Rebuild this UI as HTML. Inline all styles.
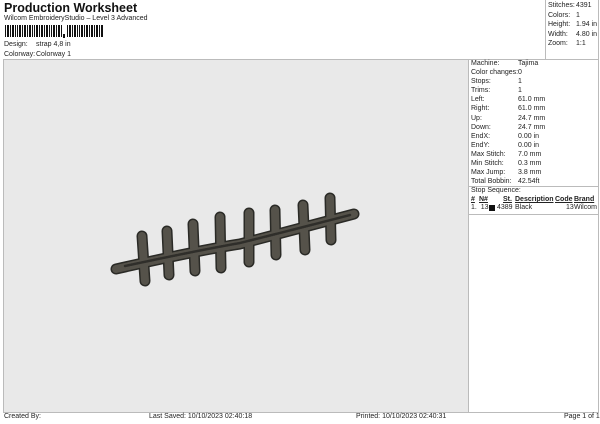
<!DOCTYPE html>
<html><head><meta charset="utf-8"><style>
body{margin:0;width:600px;height:424px;background:#fff;font-family:"Liberation Sans",sans-serif;color:#222;position:relative;overflow:hidden}
.a{position:absolute;font-size:7px;white-space:nowrap}
</style></head><body>
<div class="a" style="left:4px;top:1px;font-size:12.5px;font-weight:bold;color:#111">Production Worksheet</div>
<div class="a" style="left:4px;top:15px">Wilcom EmbroideryStudio – Level 3 Advanced</div>
<svg style="position:absolute;left:5px;top:25px" width="98" height="14">
<g fill="#111">
<rect x="0" y="0" width="1" height="12"/><rect x="2" y="0" width="2" height="12"/><rect x="5" y="0" width="1" height="12"/><rect x="7" y="0" width="2" height="12"/><rect x="10" y="0" width="1" height="12"/><rect x="12" y="0" width="1" height="12"/><rect x="14" y="0" width="2" height="12"/><rect x="17" y="0" width="1" height="12"/><rect x="19" y="0" width="2" height="12"/><rect x="22" y="0" width="1" height="12"/><rect x="24" y="0" width="2" height="12"/><rect x="27" y="0" width="1" height="12"/><rect x="29" y="0" width="1" height="12"/><rect x="31" y="0" width="2" height="12"/><rect x="34" y="0" width="1" height="12"/><rect x="36" y="0" width="2" height="12"/><rect x="39" y="0" width="1" height="12"/><rect x="41" y="0" width="2" height="12"/><rect x="44" y="0" width="1" height="12"/><rect x="46" y="0" width="1" height="12"/><rect x="48" y="0" width="2" height="12"/><rect x="51" y="0" width="1" height="12"/><rect x="53" y="0" width="2" height="12"/><rect x="56" y="0" width="1" height="12"/><rect x="58" y="9" width="2" height="4"/><rect x="62" y="0" width="1" height="12"/><rect x="64" y="0" width="2" height="12"/><rect x="67" y="0" width="1" height="12"/><rect x="69" y="0" width="2" height="12"/><rect x="72" y="0" width="1" height="12"/><rect x="74" y="0" width="1" height="12"/><rect x="76" y="0" width="2" height="12"/><rect x="79" y="0" width="1" height="12"/><rect x="81" y="0" width="2" height="12"/><rect x="84" y="0" width="1" height="12"/><rect x="86" y="0" width="2" height="12"/><rect x="89" y="0" width="1" height="12"/><rect x="91" y="0" width="2" height="12"/><rect x="94" y="0" width="1" height="12"/><rect x="96" y="0" width="2" height="12"/>
</g></svg>
<div class="a" style="left:4px;top:41px">Design:</div><div class="a" style="left:36px;top:41px">strap 4,8 in</div>
<div class="a" style="left:4px;top:51px">Colorway:</div><div class="a" style="left:36px;top:51px">Colorway 1</div>
<div style="position:absolute;left:3px;top:59px;width:595px;border-top:1px solid #bbb"></div>
<div style="position:absolute;left:545px;top:0;width:1px;height:59px;background:#bbb"></div>
<div style="position:absolute;left:598px;top:0;width:1px;height:412px;background:#bbb"></div>
<div style="position:absolute;left:3px;top:59px;width:1px;height:353px;background:#bbb"></div>
<div class="a" style="left:548px;top:1px;line-height:9.6px">Stitches:<br>Colors:<br>Height:<br>Width:<br>Zoom:</div>
<div class="a" style="left:576px;top:1px;line-height:9.6px">4391<br>1<br>1.94 in<br>4.80 in<br>1:1</div>
<div style="position:absolute;left:4px;top:60px;width:464px;height:352px;background:#e9e9e9"></div>
<div style="position:absolute;left:468px;top:60px;width:1px;height:352px;background:#bbb"></div>
<div class="a" style="left:471px;top:59px;line-height:9.1px">Machine:<br>Color changes:<br>Stops:<br>Trims:<br>Left:<br>Right:<br>Up:<br>Down:<br>EndX:<br>EndY:<br>Max Stitch:<br>Min Stitch:<br>Max Jump:<br>Total Bobbin:</div>
<div class="a" style="left:518px;top:59px;line-height:9.1px">Tajima<br>0<br>1<br>1<br>61.0 mm<br>61.0 mm<br>24.7 mm<br>24.7 mm<br>0.00 in<br>0.00 in<br>7.0 mm<br>0.3 mm<br>3.8 mm<br>42.54ft</div>
<div style="position:absolute;left:469px;top:186px;width:129px;border-top:1px solid #bbb"></div>
<div class="a" style="left:471px;top:187px">Stop Sequence:</div>
<div class="a" style="left:471px;top:196px;font-weight:bold;text-decoration:underline">#</div>
<div class="a" style="left:479px;top:196px;font-weight:bold;text-decoration:underline">N#</div>
<div class="a" style="left:503px;top:196px;font-weight:bold;text-decoration:underline">St.</div>
<div class="a" style="left:515px;top:196px;font-weight:bold;text-decoration:underline">Description</div>
<div class="a" style="left:555px;top:196px;font-weight:bold;text-decoration:underline">Code</div>
<div class="a" style="left:574px;top:196px;font-weight:bold;text-decoration:underline">Brand</div>
<div class="a" style="left:471px;top:204px">1.&nbsp; 13</div>
<div style="position:absolute;left:489px;top:205px;width:6px;height:6px;background:#111"></div>
<div class="a" style="left:497px;top:204px">4389</div>
<div class="a" style="left:515px;top:204px">Black</div>
<div class="a" style="left:566px;top:204px">13</div>
<div class="a" style="left:574px;top:204px">Wilcom</div>
<div style="position:absolute;left:469px;top:214px;width:129px;border-top:1px solid #bbb"></div>
<div style="position:absolute;left:3px;top:412px;width:596px;border-top:1px solid #bbb"></div>
<div class="a" style="left:4px;top:413px">Created By:</div>
<div class="a" style="left:149px;top:413px">Last Saved: 10/10/2023 02:40:18</div>
<div class="a" style="left:356px;top:413px">Printed: 10/10/2023 02:40:31</div>
<div class="a" style="left:564px;top:413px">Page 1 of 1</div>
<svg style="position:absolute;left:0;top:0" width="600" height="424">
<g stroke-linecap="round" fill="none">
<g stroke="#2a2a26" stroke-width="11">
<path d="M142 236 L145 281"/><path d="M167 231 L169 275"/><path d="M193 224 L195 271"/><path d="M220 217 L221 268"/><path d="M249 213 L249 262"/><path d="M275 210 L276 255"/><path d="M303 205 L305 250"/><path d="M330 198 L331 240"/>
<path d="M116 269 Q200 250 240 244 Q300 228 354 214"/>
</g>
<g stroke="#55524a" stroke-width="8">
<path d="M142 236 L145 281"/><path d="M167 231 L169 275"/><path d="M193 224 L195 271"/><path d="M220 217 L221 268"/><path d="M249 213 L249 262"/><path d="M275 210 L276 255"/><path d="M303 205 L305 250"/><path d="M330 198 L331 240"/>
<path d="M116 269 Q200 250 240 244 Q300 228 354 214"/>
</g>
<path d="M125 266 Q200 250 240 243 Q300 228 350 215" stroke="#2f2e2a" stroke-width="2.5" stroke-dasharray="1 1"/>
</g></svg>
</body></html>
